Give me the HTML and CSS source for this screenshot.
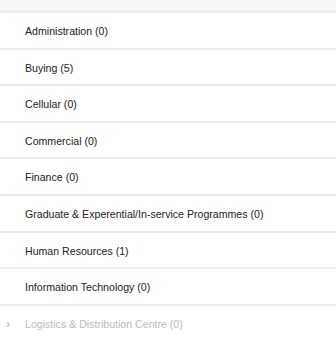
FILE: index.html
```html
<!DOCTYPE html>
<html lang="en">
<head>
  <meta charset="UTF-8" />
  <title>Departments</title>
  <link rel="stylesheet" href="styles.css">
</head>
<body>
  <div class="top-strip"></div>
  <ul class="dept-list">
    <li class="dept">Administration (0)</li>
    <li class="dept">Buying (5)</li>
    <li class="dept">Cellular (0)</li>
    <li class="dept">Commercial (0)</li>
    <li class="dept">Finance (0)</li>
    <li class="dept">Graduate &amp; Experential/In-service Programmes (0)</li>
    <li class="dept">Human Resources (1)</li>
    <li class="dept">Information Technology (0)</li>
    <li class="dept faded"><span class="chev">&rsaquo;</span>Logistics &amp; Distribution Centre (0)</li>
  </ul>
</body>
</html>
```

FILE: styles.css
```css
body {
  margin: 0;
  background: #fff;
  font-family: 'Liberation Sans', Arial, sans-serif;
  font-size: 10.6px;
  color: #222;
  overflow: hidden;
}
.top-strip {
  height: 10px;
  background: #f8f8f8;
  border-bottom: 1px solid #f0f0f0;
}
.dept-list {
  list-style: none;
  margin: 0;
  padding: 0;
}
.dept {
  position: relative;
  height: 34.6px;
  line-height: 36px;
  padding-left: 25px;
  border-top: 2px solid #ededed;
  background: #fff;
}
.faded {
  color: #bbb;
}
.chev {
  position: absolute;
  left: 6px;
  top: 0;
  font-size: 13px;
  font-weight: bold;
  color: #ccc;
}
```
